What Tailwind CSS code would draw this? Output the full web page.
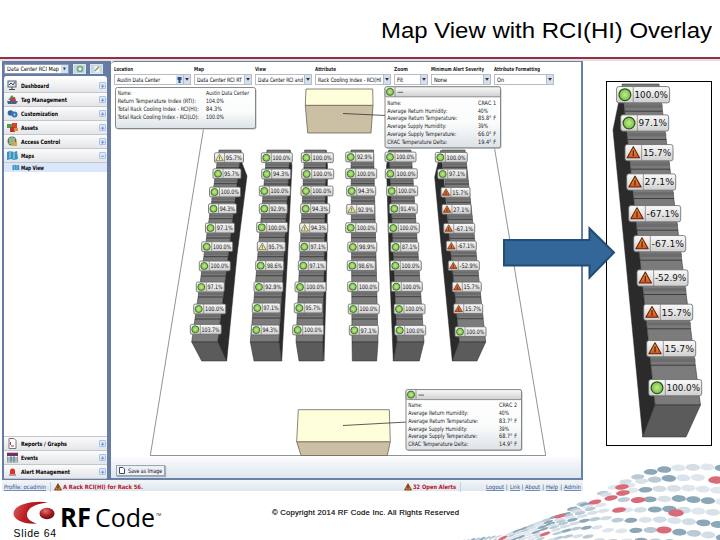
<!DOCTYPE html>
<html lang="en">
<head>
<meta charset="utf-8">
<title>Map View with RCI(HI) Overlay</title>
<script src="https://cdn.jsdelivr.net/npm/@tailwindcss/browser@4"></script>
</head>
<body class="bg-white">
<div class="relative w-[720px] h-[540px] overflow-hidden bg-white font-['Liberation_Sans',Arial,sans-serif] text-black">
  <svg id="dots" class="absolute left-0 top-0" width="720" height="540"></svg>

  <header class="h-[57px] flex justify-end items-center pr-[8px] pt-[3px]">
    <h1 class="text-[21.5px] leading-none whitespace-nowrap" data-w="331">Map View with RCI(HI) Overlay</h1>
  </header>
  <div class="h-[2px] bg-[#8f3244]"></div>
  <div class="h-[2px] bg-[#e9dde0]"></div>

  <div class="flex h-[430px]">
    <div class="ml-[2px] w-[581px] flex flex-col font-['DejaVu_Sans_Condensed','DejaVu_Sans',sans-serif] text-[6px] leading-none whitespace-nowrap">
      <div class="flex h-[419px]">
        <aside class="w-[109px] bg-[#667ca3] pl-[2px] pr-[4px] pb-[1px] flex flex-col">
          <div class="flex items-center gap-[4px] h-[15px]">
            <div class="w-[65px] h-[10px] bg-white flex items-center pl-[2px] border border-[#8a9bb5]"><span data-w="52">Data Center RCI Map</span><span class="ml-auto h-full w-[7px] bg-[#d5e0ee] flex items-center justify-center text-[4px] text-[#345]">▼</span></div>
            <div class="w-[13px] h-[10px] bg-[#c4d6e4] border border-[#dbe6f0] flex items-center justify-center"><svg width="8" height="8"><circle cx="4" cy="4" r="3.2" fill="#69a873"/><path d="M4 2v4M2 4h4" stroke="#fff" stroke-width="1.2"/></svg></div>
            <div class="w-[13px] h-[10px] bg-[#c4d6e4] border border-[#dbe6f0] flex items-center justify-center"><svg width="8" height="8"><rect x="1.5" y="1" width="5" height="6.5" fill="#f5f5f0"/><path d="M2 6L6 1.5" stroke="#9a8a60" stroke-width="1.2"/></svg></div>
          </div>
          <nav class="flex-1 bg-white rounded-t-[3px] rounded-b-[2px] flex flex-col pt-[3px] font-bold overflow-hidden" id="nav"></nav>
        </aside>
        <main class="w-[472px] bg-white border-r-2 border-b-2 border-t border-[#6882a4] rounded-tl-[4px] flex flex-col">
          <div class="h-[24px] flex gap-[3px] pl-[3px] pt-[4px]" id="tools"></div>
          <svg id="map" width="470" height="371" viewBox="111 86 470 371" class="flex-none overflow-visible"></svg>
          <div class="flex-1 bg-linear-to-b from-[#fafbfc] to-[#dee6ee] pl-[5px] pt-[8px]">
            <div class="w-[49px] h-[11px] border border-[#9aa5b2] bg-[#edf1f5] shadow-[1px_1px_1px_#aab] flex items-center gap-[3px] pl-[2px]">
              <svg width="6" height="7"><path d="M.5 .5h3.5l1.500 1.500v4.500h-5z" fill="#fff" stroke="#446"/></svg><span data-w="34">Save as Image</span>
            </div>
          </div>
        </main>
      </div>
      <footer class="h-[11px] bg-linear-to-b from-[#f3f6f9] to-[#dfe6ee] flex items-center pt-[2px] text-[#2d4f8c]">
        <span class="underline ml-[2px]" data-w="42">Profile: ocadmin</span>
        <span class="w-px h-[10px] bg-[#c6ced9] ml-[4px]"></span>
        <svg width="8" height="8" class="ml-[3px]"><path d="M4 .7L7.500 7h-7z" fill="#d97a20" stroke="#6b3510" stroke-width=".8"/><path d="M4 2.500v3" stroke="#411"/></svg>
        <span class="ml-[1px] font-bold text-[#b3142a]" data-w="80">A Rack RCI(HI) for Rack 56.</span>
        <svg width="8" height="8" class="ml-[261px]"><path d="M4 .7L7.500 7h-7z" fill="#d97a20" stroke="#6b3510" stroke-width=".8"/><path d="M4 2.500v3" stroke="#411"/></svg>
        <span class="ml-[1px] font-bold text-[#b3142a]" data-w="43">32 Open Alerts</span>
        <span class="w-px h-[10px] bg-[#c6ced9] ml-[4px]"></span>
        <span class="ml-auto mr-[2px] flex gap-[2px]"><u data-w="18">Logout</u><i class="not-italic">|</i><u data-w="10">Link</u><i class="not-italic">|</i><u data-w="15">About</u><i class="not-italic">|</i><u data-w="12">Help</u><i class="not-italic">|</i><u data-w="17">Admin</u></span>
      </footer>
    </div>
    <div class="ml-[23px] mt-[20px] w-[106px] h-[365px] border border-black bg-white">
      <svg id="inset" width="104" height="363" viewBox="607 82 104 363"></svg>
    </div>
  </div>

  <svg class="absolute left-[500px] top-[222px]" width="120" height="64" viewBox="500 222 120 64"><path d="M504 240H589.500V228.500L614 252.500L589.500 277.500V265.500H504Z" fill="#336699" stroke="#244c75" stroke-width="2"/></svg>

  <footer class="relative h-[49px]">
    <svg width="480" height="49" viewBox="0 491 480 49">
      <defs>
        <linearGradient id="sw" x1="0" y1="0" x2="1" y2=".3"><stop offset="0" stop-color="#e06060"/><stop offset=".45" stop-color="#bd2026"/><stop offset="1" stop-color="#8d1218"/></linearGradient>
        <radialGradient id="ball" cx=".4" cy=".3" r=".7"><stop offset="0" stop-color="#e5716c"/><stop offset=".6" stop-color="#a51d22"/><stop offset="1" stop-color="#6b0e12"/></radialGradient>
      </defs>
      <path d="M48 502.500C32 500 13.500 505 13.500 513.500C13.500 520 24 524.500 37 523.500C29 521.500 25.500 517 27.500 512C29.500 507 37 503.500 48 502.500Z" fill="url(#sw)"/>
      <ellipse cx="47" cy="513.500" rx="7.500" ry="5.800" fill="url(#ball)"/>
      <text x="60" y="527.300" font-family="Open Sans" font-weight="700" font-size="26.500" textLength="31" lengthAdjust="spacingAndGlyphs">RF</text>
      <text x="95" y="527.300" font-family="Open Sans" font-size="26" textLength="60" lengthAdjust="spacingAndGlyphs">Code</text>
      <text x="156" y="515.500" font-family="Open Sans" font-size="3.500">TM</text>
      <text x="13.500" y="537" font-family="Liberation Sans" font-size="10.500" textLength="42.500">Slide 64</text>
      <text x="272" y="515" font-family="Liberation Sans" font-size="7.700" stroke="#000" stroke-width=".15" textLength="187">© Copyright 2014 RF Code Inc.  All Rights Reserved</text>
    </svg>
  </footer>
</div>

<script>
const F = 'font-family="DejaVu Sans Condensed, DejaVu Sans, sans-serif"';

// Sidebar
const icons = {
  dash: '<rect x="1" y="1" width="8" height="6" fill="#dfe6ea" stroke="#56646e"/><path d="M2 5l2-2 2 2 2-3M5 7v2M2 9.500h6" stroke="#445" fill="none"/>',
  tag: '<path d="M1 6l4-5 3 4z" fill="#3c9a58"/><path d="M3 5l5-2 1 4-6 1z" fill="#c23a3a"/><path d="M0 7h11l-2 3H1z" fill="#44618f"/>',
  cust: '<circle cx="3.500" cy="5" r="2.800" fill="#2f66a8"/><circle cx="7.500" cy="6.500" r="3" fill="#3976b8"/><circle cx="7.500" cy="6.500" r="1" fill="#bcd3ea"/>',
  assets: '<rect x="0" y="2" width="5" height="4" fill="#4c9e47"/><rect x="5" y="1" width="5" height="5" fill="#d5452f"/><rect x="3" y="5" width="5" height="5" fill="#b8352b"/><rect x="7" y="6" width="4" height="3" fill="#e08a3a"/>',
  access: '<circle cx="5" cy="5" r="4.500" fill="#51764a"/><path d="M3 2v6M5 1v8M7 2v5" stroke="#e5ecd8"/><rect x="6" y="6" width="4" height="4" fill="#d9a640"/>',
  maps: '<path d="M0 2l3-1 4 1 3-1 1 8-4 1-3-1-4 1z" fill="#3c93bd"/><path d="M3 1v7M7 2v7" stroke="#a8dbe9"/>',
  rep: '<path d="M2 .5h5l2 2v8H2z" fill="#fff" stroke="#777"/><path d="M3.500 4v3M4 8h3" stroke="#b33"/>',
  ev: '<rect x="0" y="1" width="11" height="9" fill="#f4f4f4" stroke="#555" stroke-width=".6"/><path d="M0 2.500h11" stroke="#7b2d6b" stroke-width="3"/><path d="M0 6h11M0 8h11M4 4v6M7 4v6" stroke="#367" stroke-width=".8"/>',
  alert: '<path d="M3 8V5a2.500 2.500 0 015 0v3z" fill="#d8342c"/><rect x="2" y="8" width="7" height="2" fill="#b99"/>'
};
const item = (k, t, w, s) => `<div class="h-[14px] shrink-0 flex items-center pl-[3px] pr-[1px] border-b border-[#c3c7cc] bg-linear-to-b from-[#fbfbfc] to-[#e4e5e8]"><svg width="11" height="11">${icons[k]}</svg><span class="ml-[3px]" data-w="${w}">${t}</span><span class="ml-auto size-[7px] rounded-[1px] border border-[#a9c3e6] bg-[#dfebfa] text-[#5580b5] text-[6px] flex items-center justify-center">${s}</span></div>`;
document.getElementById('nav').innerHTML =
  item('dash', 'Dashboard', 28, '+') + item('tag', 'Tag Management', 46, '+') + item('cust', 'Customization', 37, '+') +
  item('assets', 'Assets', 17, '+') + item('access', 'Access Control', 39, '+') + item('maps', 'Maps', 13, '−') +
  `<div class="h-[9px] shrink-0 bg-[#dae7fb] flex items-center pl-[8px]"><svg width="8" height="7" viewBox="0 0 11 11">${icons.maps}</svg><span class="ml-[1px]" data-w="23">Map View</span></div><div class="flex-1 border-b border-[#c3c7cc]"></div>` +
  item('rep', 'Reports / Graphs', 46, '+') + item('ev', 'Events', 17, '+') + item('alert', 'Alert Management', 49, '+');

// Toolbar selectors
const caret = '<svg width="4" height="3"><path d="M0 0h4L2 2.800z" fill="#334"/></svg>';
document.getElementById('tools').innerHTML = [
  ['Location', 19, 'Austin Data Center', 43, 77, 1], ['Map', 10, 'Data Center RCI RT', 45, 58], ['View', 11, 'Data Center RCI and', 45, 57],
  ['Attribute', 21, 'Rack Cooling Index - RCI(HI', 63, 76], ['Zoom', 14, 'Fit', 6, 34], ['Minimum Alert Severity', 53, 'None', 13, 60], ['Attribute Formatting', 46, 'On', 7, 60]
].map(([l, lw, v, vw, w, b]) => `<div class="shrink-0" style="width:${w}px"><div class="font-bold h-[8px] text-[#222] text-[5.5px]" data-w="${lw}">${l}</div><div class="h-[11px] border border-[#b4bdc9] bg-white flex items-center pl-[2px]"><span data-w="${vw}">${v}</span>${b ? '<span class="ml-auto w-[7px] h-[9px] bg-[#d8e3f1] flex justify-center items-center"><svg width="5" height="7"><path d="M.5 1h4v3h-1v3h-2v-3h-1z" fill="#2f4f86"/></svg></span>' : ''}<span class="${b ? '' : 'ml-auto '}w-[7px] h-[9px] bg-[#d5e0ec] border-l border-[#b4bdc9] flex justify-center items-center">${caret}</span></div></div>`).join('');

// Rack drawings
const defs = '<defs><linearGradient id="lb" x1="0" y1="0" x2="0" y2="1"><stop offset="0" stop-color="#fafafa"/><stop offset="1" stop-color="#cfcfcf"/></linearGradient><linearGradient id="bx" x1="0" y1="0" x2="0" y2="1"><stop offset="0" stop-color="#fff"/><stop offset=".6" stop-color="#fafbfb"/><stop offset="1" stop-color="#dce2e7"/></linearGradient><radialGradient id="gr"><stop offset="0" stop-color="#c2ec8c"/><stop offset="1" stop-color="#79bd45"/></radialGradient><linearGradient id="or" x1="0" y1="0" x2="0" y2="1"><stop offset="0" stop-color="#f0b035"/><stop offset="1" stop-color="#dd4b1c"/></linearGradient></defs>';
function icon(type, cx, cy, r) {
  if (type === 'g') return `<circle cx="${cx}" cy="${cy}" r="${r}" fill="url(#gr)" stroke="#2f5a1e" stroke-width="${r * .22}"/>`;
  const f = type === 'w' ? '#f3f0a0' : 'url(#or)', s = type === 'w' ? '#55552a' : '#5a2410';
  return `<path d="M${cx} ${cy - r}L${cx + r * 1.05} ${cy + r * .85}H${cx - r * 1.05}Z" fill="${f}" stroke="${s}" stroke-width="${r * .18}" stroke-linejoin="round"/><path d="M${cx} ${cy - r * .4}V${cy + r * .6}" stroke="${s}" stroke-width="${r * .22}"/>`;
}
function label(x, y, w, h, type, t, fs) {
  const iw = h * 1.02;
  return `<rect x="${x}" y="${y - h / 2}" width="${w}" height="${h}" rx="${h * .14}" fill="url(#lb)" stroke="#666" stroke-width=".8"/><path d="M${x + iw} ${y - h / 2}v${h}" stroke="#777" stroke-width=".7"/>` + icon(type, x + iw / 2, y, h * .36) +
    `<text x="${x + iw + 1.3}" y="${y + fs * .36}" ${F} font-size="${fs}" fill="#111" textLength="${w - iw - 3}" lengthAdjust="spacingAndGlyphs">${t}</text>`;
}
const P = (pts, fill) => `<polygon points="${pts}" fill="${fill}" stroke="#2a2a2a" stroke-width=".5"/>`;
// front: [topLeft, topRight, top, bottomLeft, bottomRight, bottom]
function rack(front, dark, block, labels, h, fs, dy) {
  const [a, b, t, c, d, e] = front;
  let s = dark ? P(dark, '#2b2b2b') : '';
  s += P(`${a},${t} ${b},${t} ${d},${e} ${c},${e}`, '#7b7b7b') + P(block, '#5b5b5b');
  for (const l of labels.slice(0, -1)) {
    const y = l[1] + dy, k = (y - t) / (e - t), xl = a + (c - a) * k, xr = b + (d - b) * k;
    s += `<path d="M${xl} ${y}H${xr}" stroke="#2e2e2e" stroke-width=".8"/><path d="M${xl} ${y - dy * .3}H${xr}" stroke="#6c6c6c" stroke-width="${dy * .2}"/>`;
  }
  return s + labels.map(l => label(l[0], l[1], l[2], h, l[3], l[4], fs)).join('');
}
const H = '100.0%';
const racks = [
  [[219, 241, 150, 191.7, 217.7, 342], '241,151 242,163 247,176 237,255 226.7,361 217.7,342', '191.7,342 217.7,342 226.7,361 201.7,361',
    [[214.5, 157.7, 29, 'w', '95.7%'], [213, 173.7, 28, 'g', '95.7%'], [209.5, 192, 31, 'g', H], [208.5, 208.7, 28, 'g', '94.3%'], [205.5, 228, 29, 'g', '97.1%'], [201.7, 246.7, 31, 'g', H], [199.3, 266, 31, 'g', H], [196.3, 287, 28, 'g', '97.1%'], [193.7, 309, 32, 'g', H], [190.3, 329.3, 31, 'g', '103.7%']]],
  [[267, 290, 150, 250.3, 279, 342], '290,150 292,166 287.5,258 281.7,361 279,342', '250.3,342 279,342 281.7,361 254,361',
    [[261.3, 157.7, 31, 'g', H], [261.7, 174, 29, 'g', '94.3%'], [259.3, 191, 31, 'g', H], [259.3, 208.7, 28, 'g', '92.9%'], [256.7, 227.3, 31, 'g', H], [257.3, 246.7, 28, 'w', '95.7%'], [255.7, 265.7, 28, 'g', '98.6%'], [254, 287, 29, 'g', '92.9%'], [252.3, 308, 28, 'g', '97.1%'], [251.3, 330, 28, 'g', '94.3%']]],
  [[304.7, 326, 150, 296, 323, 342], '326,150 327.5,166 327,255 324,361 322,342', '296,342 323,342 323.3,361 299,361',
    [[301.3, 157.7, 32, 'g', H], [301.7, 174, 32, 'g', H], [301, 191, 32, 'g', H], [300.7, 208.7, 29, 'g', '94.3%'], [299.7, 228, 28, 'w', '94.3%'], [299.3, 246.7, 28, 'g', '97.1%'], [298.3, 265.7, 28, 'g', '97.1%'], [295, 287, 31, 'g', H], [294.3, 308, 28, 'g', '95.7%'], [292.7, 330, 31, 'g', H]]],
  [[351, 373.5, 150, 352, 378, 342], '', '352,342 378,342 376.7,361 352.3,361',
    [[345.7, 157, 28, 'g', '92.9%'], [345.7, 173.7, 31, 'g', H], [346.7, 191, 29, 'g', '94.3%'], [346.7, 209.3, 28, 'w', '92.9%'], [345.7, 227.7, 31, 'g', H], [347.8, 247, 29, 'g', '98.9%'], [347.3, 265.7, 28, 'g', '98.6%'], [347.7, 286.7, 31, 'g', H], [348.3, 309, 31, 'g', H], [349.3, 330.3, 29, 'g', '97.1%']]],
  [[389, 411, 150, 397, 424, 342], '389,150 386.500,166 389,255 393.3,361 397,342', '397,342 424,342 419.3,361 393.3,361',
    [[385, 157, 31, 'g', H], [385.3, 173.7, 32, 'g', H], [386.7, 191, 31, 'g', H], [389.3, 208.7, 28, 'g', '91.4%'], [388.3, 228, 31, 'g', H], [390.7, 247, 28, 'g', '87.1%'], [390.3, 265.7, 31, 'g', H], [391.3, 286.7, 31, 'g', H], [394, 309, 31, 'g', H], [394.7, 330.3, 31, 'g', H]]],
  [[442, 465, 150, 459.3, 485.7, 342], '441,150 434.7,177 442,255 452.3,361 459.3,342', '459.3,342 485.7,342 477,361 452.3,361',
    [[435.3, 157.3, 32, 'g', H], [437.7, 174, 29, 'g', '97.1%'], [441, 192.3, 29, 'a', '15.7%'], [442, 209.3, 29, 'a', '27.1%'], [443.7, 228.3, 31, 'a', '-67.1%'], [446.3, 246, 30, 'a', '-67.1%'], [448.3, 265.7, 31, 'a', '-52.9%'], [452.3, 287, 29, 'a', '15.7%'], [453.7, 308.7, 29, 'a', '15.7%'], [455, 331.7, 31, 'g', H]]]
];
const txt = (x, y, t, w) => `<text x="${x}" y="${y + 2.1}" ${F} font-size="6" fill="#1a1a1a" textLength="${w}" lengthAdjust="spacingAndGlyphs">${t}</text>`;
function card(x, y, vx, ys, rows, w, h, head) {
  let s = `<rect x="${x + 1}" y="${y + 1}" width="${w}" height="${h}" rx="2" fill="#bbb"/><rect x="${x}" y="${y}" width="${w}" height="${h}" rx="2" fill="url(#bx)" stroke="#7c7c7c" stroke-width=".9"/>`;
  if (head) s += `<rect x="${x}" y="${y}" width="${w}" height="10" rx="1.500" fill="url(#lb)" stroke="#777" stroke-width=".8"/><path d="M${x + 10} ${y}v10" stroke="#777" stroke-width=".7"/>` + icon('g', x + 5, y + 5, 3.6) + `<path d="M${x + 12.5} ${y + 5.500}h5.500" stroke="#666"/>`;
  return s + rows.map((r, i) => txt(x + 2.3, ys + i * 7.75, r[0], r[1]) + txt(vx, ys + i * 7.75, r[2], r[3])).join('');
}
const crac = (n, v) => [['Name:', 14, 'CRAC ' + n, 18], ['Average Return Humidity:', 60, '40%', 10], ['Average Return Temperature:', 70, v[0], 18], ['Average Supply Humidity:', 59, '39%', 10], ['Average Supply Temperature:', 69, v[1], 18], ['CRAC Temperature Delta:', 60, v[2], 18]];
document.getElementById('map').innerHTML = defs +
  '<path d="M203.500 129L150.300 455.500H545.700L494.500 148" fill="none" stroke="#777" stroke-width=".8"/>' +
  '<g stroke="#6b665a" stroke-width=".8"><path d="M305.300 105.300H373L371 133H307.700Z" fill="#cbbfa4"/><path d="M306 89H372.700L373 105.300H305.300Z" fill="#fffedb"/><path d="M296.700 441.700H390.300L387.300 455.500H301Z" fill="#cbbfa4"/><path d="M298.300 409.700H389.300L390.300 441.700H296.700Z" fill="#fffedb"/><path d="M343 113.500L386 115.500M343 425.500L407 422" stroke="#333"/></g>' +
  racks.map(r => rack(...r, 9.8, 6.2, 10)).join('') +
  card(115.5, 87.5, 206, 93.3, [['Name:', 14, 'Austin Data Center', 43], ['Return Temperature Index (RTI):', 78, '104.0%', 18], ['Total Rack Cooling Index - RCI(HI):', 81, '84.3%', 16], ['Total Rack Cooling Index - RCI(LO):', 81, '100.0%', 18]], 140, 41) +
  card(385, 86.8, 478, 102.7, crac(1, ['85.8° F', '66.0° F', '19.4° F']), 115.500, 61, true) +
  card(406, 389.6, 499, 405.3, crac(2, ['83.7° F', '68.7° F', '14.9° F']), 115.500, 60.5, true);

document.getElementById('inset').innerHTML = rack([622, 659, 84, 655, 700.5, 405], '622,86 613,130 626.700,270 642.700,437 655,405', '655,405 700.5,405 686,437 642.7,437',
  [[616.6, 94.7, 53, 'g', H], [620.7, 123, 48, 'g', '97.1%'], [625, 152.7, 48, 'a', '15.7%'], [626.7, 182, 49, 'a', '27.1%'], [628.7, 213.7, 52, 'a', '-67.1%'], [633.7, 243.7, 52, 'a', '-67.1%'], [637, 278, 51, 'a', '-52.9%'], [643.7, 312.3, 49, 'a', '15.7%'], [646.7, 348.7, 49, 'a', '15.7%'], [648.7, 387.7, 53, 'g', H]], 16.3, 9, 16.5);

// Dotted wave in the lower right corner
const crest = [[440, 546], [465, 541], [503, 536], [560, 515], [593, 498], [622, 483], [650, 472], [673, 468], [707, 467], [760, 471], [860, 490]];
const cy = x => { for (let i = 1; i < crest.length; i++) if (x <= crest[i][0]) { const [a, b] = [crest[i - 1], crest[i]]; return a[1] + (b[1] - a[1]) * (x - a[0]) / (b[0] - a[0]); } return 480; };
const cols = ['#dbe3ea', '#b9cad6', '#8ba7b8', '#d3dde6', '#dfe6ec', '#bccbd8', '#8ba7b8', '#d9e1e8'];
const reds = [[503, 538], [560, 516], [595, 502], [611, 498], [622, 487], [623, 493], [619, 510], [638, 500], [545, 534], [664, 530], [676, 513], [716, 480]];
let d = '', seed = 7;
for (let x = 462; x < 840;) {
  const k = Math.min(1, Math.max(0, (x - 480) / 190)), k2 = k * k;
  for (let v = 0; v < 14; v++) {
    const px = x - v * (4 + 5.5 * k), py = cy(x) + v * (4 + 6.5 * k2);
    seed = (seed * 1103515245 + 12345) % 2147483648;
    if (py > 546 || px > 728) continue;
    const q = Math.min(1, Math.max(0, (px - 480) / 190));
    if (reds.some(r => Math.hypot(r[0] - px, (r[1] - py) * 1.4) < 3 + 5.5 * q)) continue;
    d += `<ellipse cx="${px}" cy="${py}" rx="${3.6 + 3.6 * q}" ry="${1 + 2.4 * q * q}" fill="${cols[(seed >> 12) & 7]}" transform="rotate(${-28 + 30 * q} ${px} ${py})"/>`;
  }
  x += 5 + 9.5 * k;
}
for (const [x, y] of reds) { const q = Math.min(1, Math.max(0, (x - 480) / 190)); d += `<ellipse cx="${x}" cy="${y}" rx="${4.5 + 3.3 * q}" ry="${1.4 + 2.3 * q * q}" fill="#d96a78" transform="rotate(${-28 + 28 * q} ${x} ${y})"/>`; }
document.getElementById('dots').innerHTML = d;

for (const el of document.querySelectorAll('[data-w]')) {
  const w = el.dataset.w, under = el.tagName === 'U' || el.classList.contains('underline');
  el.style.flexShrink = '0';
  el.innerHTML = `<svg width="${w}" style="height:1em;overflow:visible"><text x="0" dy=".86em" fill="currentColor" ${under ? 'text-decoration="underline"' : ''} textLength="${w}" lengthAdjust="spacingAndGlyphs">${el.textContent}</text></svg>`;
}
</script>
</body>
</html>
